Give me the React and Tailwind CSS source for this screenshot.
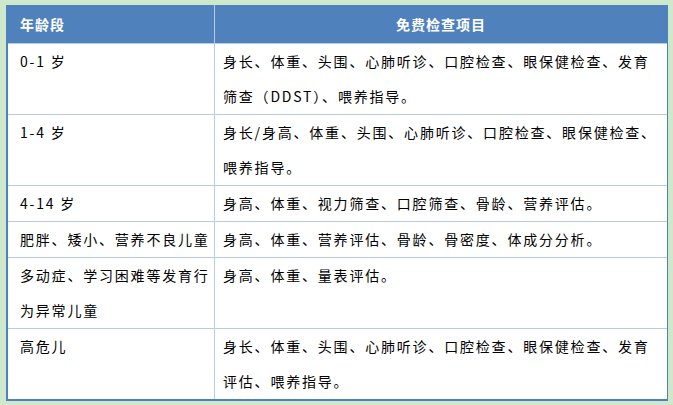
export default function App() {
  const rows = [
    ["0-1 岁", "身长、体重、头围、心肺听诊、口腔检查、眼保健检查、发育筛查（DDST）、喂养指导。"],
    ["1-4 岁", "身长/身高、体重、头围、心肺听诊、口腔检查、眼保健检查、喂养指导。"],
    ["4-14 岁", "身高、体重、视力筛查、口腔筛查、骨龄、营养评估。"],
    ["肥胖、矮小、营养不良儿童", "身高、体重、营养评估、骨龄、骨密度、体成分分析。"],
    ["多动症、学习困难等发育行为异常儿童", "身高、体重、量表评估。"],
    ["高危儿", "身长、体重、头围、心肺听诊、口腔检查、眼保健检查、发育评估、喂养指导。"],
  ];
  return (
    <div className="w-[673px] h-[405px] bg-[#cfe8cc] pt-[5px] pl-[6px] overflow-hidden" style={{ fontFamily: '"Microsoft YaHei","Noto Sans CJK SC",sans-serif' }}>
      <div className="w-[662px] border-l-2 border-b-2 border-r border-[#4f81bd] bg-white text-[14px] text-black">
        <div className="flex h-[38px] bg-[#4f81bd] text-white font-bold items-center tracking-[1px]">
          <div className="w-[207px] pl-[12px] border-r border-[#b8cce4] h-full flex items-center">年龄段</div>
          <div className="flex-1 text-center">免费检查项目</div>
        </div>
        {rows.map((r, i) => (
          <div key={i} className="flex border-t border-[#b8cce4] leading-[35px] tracking-[1.8px]">
            <div className="w-[207px] pl-[12px] pr-[2px] border-r border-[#b8cce4]">{r[0]}</div>
            <div className="flex-1 pl-[8px] pr-[10px]">{r[1]}</div>
          </div>
        ))}
      </div>
    </div>
  );
}
